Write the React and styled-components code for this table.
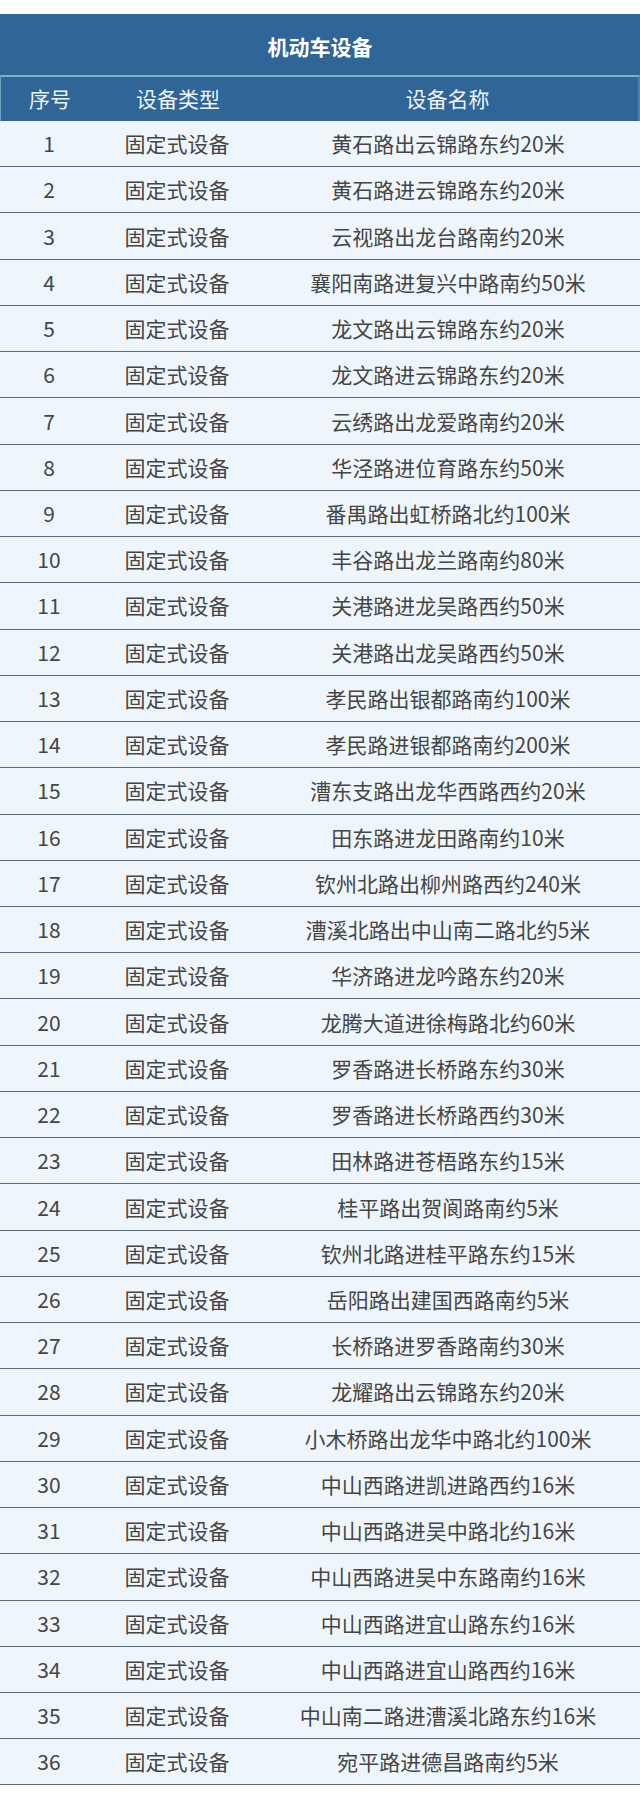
import React from "react";
import styled, { createGlobalStyle } from "styled-components";

const Global = createGlobalStyle`
  html, body { margin: 0; padding: 0; background: #ffffff; }
  body { font-family: "Noto Sans CJK SC", "Noto Sans", sans-serif; }
`;

const Page = styled.div`
  width: 640px;
  padding-top: 14px;
  padding-bottom: 33px;
`;

const Title = styled.div`
  height: 61px;
  background: #2f6597;
  color: #ffffff;
  font-size: 21px;
  font-weight: 700;
  display: flex;
  align-items: center;
  justify-content: center;
  padding-top: 2px;
  box-sizing: border-box;
`;

const Grid = styled.div`
  display: grid;
  grid-template-columns: 98px 158px 1fr;
  align-items: center;
`;

const HeadRow = styled(Grid)`
  height: 46px;
  box-sizing: border-box;
  background: #2f6597;
  border-top: 2px solid #7fb1c9;
  border-left: 1px solid #6f9fbf;
  border-right: 2px solid #4f82ab;
  color: #eef4fa;
  font-size: 21px;
  padding-bottom: 1px;
`;

const Row = styled(Grid)`
  height: 46.24px;
  box-sizing: border-box;
  background: #eef6fc;
  border-bottom: 1.5px solid #5d6c76;
  color: #454545;
  font-size: 21px;
`;

const Cell = styled.div`
  text-align: center;
  white-space: nowrap;
  line-height: 1;
  margin-left: ${(p) => (p.$shift ? p.$shift : 0)}px;
`;

const data = [
  "黄石路出云锦路东约20米",
  "黄石路进云锦路东约20米",
  "云视路出龙台路南约20米",
  "襄阳南路进复兴中路南约50米",
  "龙文路出云锦路东约20米",
  "龙文路进云锦路东约20米",
  "云绣路出龙爱路南约20米",
  "华泾路进位育路东约50米",
  "番禺路出虹桥路北约100米",
  "丰谷路出龙兰路南约80米",
  "关港路进龙吴路西约50米",
  "关港路出龙吴路西约50米",
  "孝民路出银都路南约100米",
  "孝民路进银都路南约200米",
  "漕东支路出龙华西路西约20米",
  "田东路进龙田路南约10米",
  "钦州北路出柳州路西约240米",
  "漕溪北路出中山南二路北约5米",
  "华济路进龙吟路东约20米",
  "龙腾大道进徐梅路北约60米",
  "罗香路进长桥路东约30米",
  "罗香路进长桥路西约30米",
  "田林路进苍梧路东约15米",
  "桂平路出贺阆路南约5米",
  "钦州北路进桂平路东约15米",
  "岳阳路出建国西路南约5米",
  "长桥路进罗香路南约30米",
  "龙耀路出云锦路东约20米",
  "小木桥路出龙华中路北约100米",
  "中山西路进凯进路西约16米",
  "中山西路进吴中路北约16米",
  "中山西路进吴中东路南约16米",
  "中山西路进宜山路东约16米",
  "中山西路进宜山路西约16米",
  "中山南二路进漕溪北路东约16米",
  "宛平路进德昌路南约5米",
];

export default function App() {
  return (
    <>
      <Global />
      <Page>
        <Title>机动车设备</Title>
        <HeadRow>
          <Cell>序号</Cell>
          <Cell>设备类型</Cell>
          <Cell>设备名称</Cell>
        </HeadRow>
        {data.map((name, i) => (
          <Row key={i}>
            <Cell>{i + 1}</Cell>
            <Cell>固定式设备</Cell>
            <Cell>{name}</Cell>
          </Row>
        ))}
      </Page>
    </>
  );
}
